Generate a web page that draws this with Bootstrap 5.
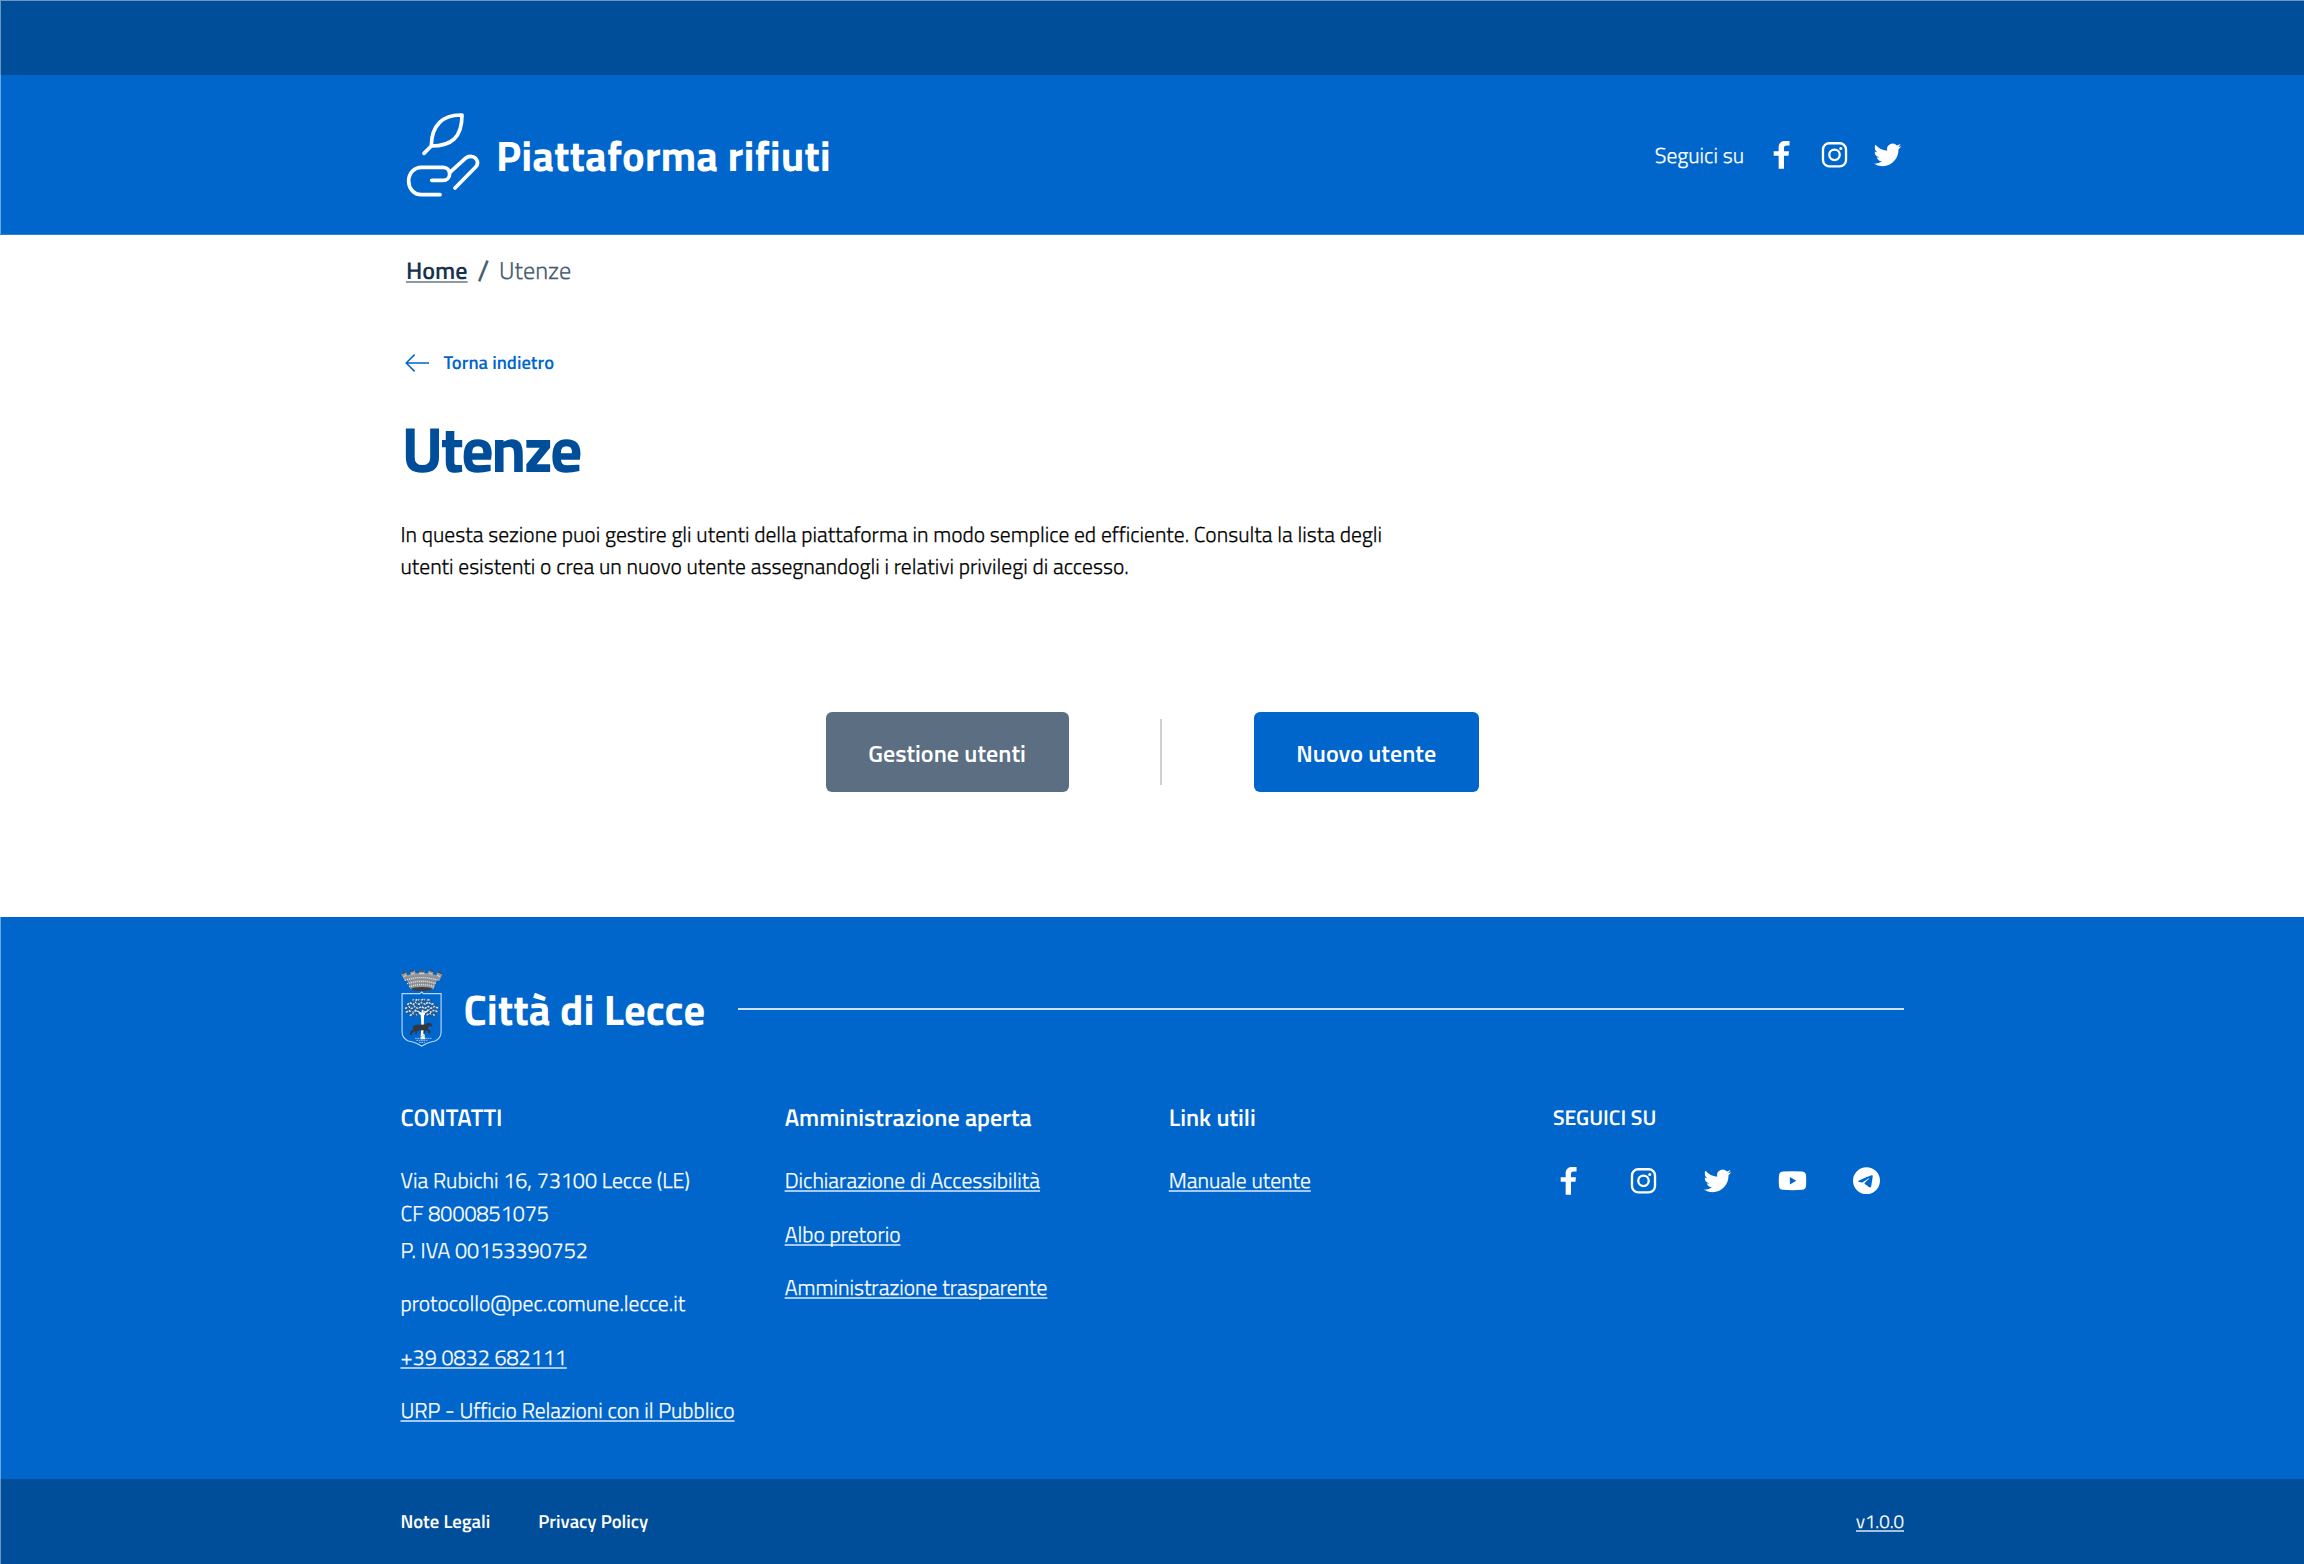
<!DOCTYPE html>
<html lang="it">
<head>
<meta charset="utf-8">
<meta name="viewport" content="width=device-width, initial-scale=1">
<title>Piattaforma rifiuti - Utenze</title>
<link href="https://cdn.jsdelivr.net/npm/bootstrap@5.3.0/dist/css/bootstrap.min.css" rel="stylesheet">
<style>
:root{--blue:#0066cc;--navy:#004d99;--edge:rgba(255,255,255,.42)}
body{font-family:"Titillium Web",Roboto,"Liberation Sans",sans-serif;font-size:21.55px;line-height:32.4px;color:#000;background:#fff;text-rendering:geometricPrecision}
.page-wrap{width:1503.5px;margin-left:400.5px}
.top-strip{height:75px;background:var(--navy);box-shadow:inset 1px 1px 0 var(--edge)}
.main-header{height:160px;background:var(--blue);border-bottom:1px solid #2e82d6;box-shadow:inset 1px 0 0 var(--edge)}
.brand-icon{width:74px;height:86px;margin-left:5.5px}
.brand-name{font-size:42.7px;line-height:48px;margin-left:16px;padding-top:2px}
.thin{font-weight:300;-webkit-text-stroke:.25px currentColor}
.follow{padding-top:4px;margin-right:20px}
.social{width:35px;height:35px;fill:#fff;flex:none}
.head-social{gap:18px;margin-right:-1px}
.foot-social{gap:39.4px;margin-left:-1.5px;margin-top:28.5px}
.crumbs{padding:19.5px 0 0 5.5px;font-size:24.2px;line-height:32px}
.crumbs a{color:#17324d;font-weight:600;text-decoration-color:rgba(23,50,77,.5)}
.crumbs .sep{color:#455b71;width:31.5px;text-align:center;font-weight:400;font-size:29px;-webkit-text-stroke:.4px currentColor}
.crumbs .here{color:#455b71}
a{text-decoration:underline;text-decoration-thickness:1.5px;text-underline-offset:2px;text-decoration-skip-ink:none}
.back{margin:62.5px 0 0 4.5px;font-size:18.65px;font-weight:600;line-height:28px;color:var(--blue);text-decoration:none;gap:14.5px;width:max-content}
.back svg{width:24px;height:18px;fill:none;stroke:var(--blue);stroke-width:1.5}
h1{font-size:64px;line-height:72px;letter-spacing:-2.76px;color:var(--navy);margin:35px 0 34.5px 1px}
.intro{margin:0}
.actions{margin-top:128.7px;padding-left:425px}
.btn-act{--bs-btn-font-size:24.1px;--bs-btn-color:#fff;--bs-btn-border-width:0;--bs-btn-border-radius:6px;--bs-btn-padding-x:0;height:80px;padding-top:7px;line-height:32px;font-weight:600}
.btn-grey{--bs-btn-bg:#5c6f82;width:243px}
.btn-blue{--bs-btn-bg:var(--blue);width:225.5px}
.bar{width:2px;height:66px;background:#d0d0d0;margin:0 91.5px}
main{height:682px}
footer{color:#fff}
footer a{color:#fff;text-decoration-color:rgba(255,255,255,.65)}
.foot-main{height:562px;padding-top:53px;background:var(--blue);box-shadow:inset 1px 0 0 var(--edge)}
.crest{width:41.5px;height:77px}
.city{font-size:42.7px;line-height:48px;margin-left:21.5px;padding-top:3px}
.rule{height:2px;background:#cfe1f4;margin-left:33px}
.foot-cols{--bs-gutter-x:33px;margin-top:55.3px}
.foot-cols h2{font-size:24.05px;line-height:32px;margin:0 0 30.8px;font-weight:600}
.foot-cols p{margin:0 0 21px;white-space:nowrap}
.foot-cols p.addr{margin-bottom:5px}
.foot-cols h2.follow-title{font-size:21.35px;margin:0}
.foot-bottom{height:85px;background:var(--navy);box-shadow:inset 1px 0 0 var(--edge);font-size:18.7px}
.foot-bottom .page-wrap{padding-top:1px}
.foot-bottom a.plain{text-decoration:none;font-weight:600}
</style>
</head>
<body>
<svg class="d-none" xmlns="http://www.w3.org/2000/svg">
  <symbol id="fb" viewBox="0 0 24 24"><path d="M10.05 21.7v-8.9h-3.4V9.7h3.4V7.1c0-3.1 1.95-4.4 4.55-4.4h2.9v3.1h-1.9c-1.5 0-1.9.7-1.9 1.9v2h3.4l-.3 3.1h-3.1v8.9z"/></symbol>
  <symbol id="ig" viewBox="0 0 24 24"><g fill="none" stroke="#fff" stroke-width="1.6"><rect x="4.1" y="4.3" width="15.8" height="15.8" rx="4.3"/><circle cx="12" cy="12.2" r="3.6"/></g><circle cx="16.3" cy="7.9" r="1.05"/></symbol>
  <symbol id="tw" viewBox="0 0 24 24"><path transform="translate(2.5 2.8) scale(.79)" d="M23.953 4.57a10 10 0 01-2.825.775 4.958 4.958 0 002.163-2.723c-.951.555-2.005.959-3.127 1.184a4.92 4.92 0 00-8.384 4.482C7.69 8.095 4.067 6.13 1.64 3.162a4.822 4.822 0 00-.666 2.475c0 1.71.87 3.213 2.188 4.096a4.904 4.904 0 01-2.228-.616v.06a4.923 4.923 0 003.946 4.827 4.996 4.996 0 01-2.212.085 4.936 4.936 0 004.604 3.417 9.867 9.867 0 01-6.102 2.105c-.39 0-.779-.023-1.17-.067a13.995 13.995 0 007.557 2.209c9.053 0 13.998-7.496 13.998-13.985 0-.21 0-.42-.015-.63A9.935 9.935 0 0024 4.59z"/></symbol>
  <symbol id="yt" viewBox="0 0 24 24"><path fill-rule="evenodd" d="M5.4 5.9q6.6-.6 13.2 0c1.8.2 2.6 1.1 2.7 2.8q.2 3.5 0 7c-.2 1.7-1 2.5-2.7 2.7q-6.6.6-13.2 0c-1.8-.2-2.6-1.1-2.7-2.7q-.2-3.5 0-7c.1-1.7.9-2.6 2.7-2.8zM10.2 9.6v5.2l4.4-2.6z"/></symbol>
  <symbol id="tg" viewBox="0 0 24 24"><path transform="translate(2.75 2.85) scale(.77)" d="M11.944 0A12 12 0 0 0 0 12a12 12 0 0 0 12 12 12 12 0 0 0 12-12A12 12 0 0 0 12 0a12 12 0 0 0-.056 0zm4.962 7.224c.1-.002.321.023.465.14a.506.506 0 0 1 .171.325c.016.093.036.306.02.472-.18 1.898-.962 6.502-1.36 8.627-.168.9-.499 1.201-.82 1.23-.696.065-1.225-.46-1.9-.902-1.056-.693-1.653-1.124-2.678-1.8-1.185-.78-.417-1.21.258-1.91.177-.184 3.247-2.977 3.307-3.23.007-.032.014-.15-.056-.212s-.174-.041-.249-.024c-.106.024-1.793 1.14-5.061 3.345-.48.33-.913.49-1.302.48-.428-.008-1.252-.241-1.865-.44-.752-.245-1.349-.374-1.297-.789.027-.216.325-.437.893-.663 3.498-1.524 5.83-2.529 6.998-3.014 3.332-1.386 4.025-1.627 4.476-1.635z"/></symbol>
</svg>

<header class="text-white">
  <div class="top-strip"></div>
  <div class="main-header">
    <div class="page-wrap h-100 d-flex align-items-center">
      <svg class="brand-icon" viewBox="78 156 222 258" fill="none" stroke="#fff" stroke-width="11" stroke-linecap="round" stroke-linejoin="round">
        <path d="M246 165C190 163 154 195 154 258 215 258 246 232 246 165z"/><path d="M154 258l-22 22"/>
        <path d="M180 404H125C100 404 86 384 86 363 86 340 102 322 125 322H189C202 322 209 331 209 342 209 353 200 361 189 361H155"/>
        <path d="M209 338L256 295C265 287 279 287 287 295 294 303 294 313 287 321L225 384"/>
      </svg>
      <div class="brand-name fw-bold">Piattaforma rifiuti</div>
      <div class="follow thin ms-auto">Seguici su</div>
      <div class="head-social d-flex">
        <svg class="social"><use href="#fb"/></svg>
        <svg class="social"><use href="#ig"/></svg>
        <svg class="social"><use href="#tw"/></svg>
      </div>
    </div>
  </div>
</header>

<main>
  <div class="page-wrap">
    <nav class="crumbs d-flex" aria-label="breadcrumb">
      <a href="#">Home</a><span class="sep">/</span><span class="here thin">Utenze</span>
    </nav>
    <a class="back d-flex align-items-center" href="#">
      <svg viewBox="0 0 24 18"><path d="M24 9H1.2M9.6.6L1.2 9l8.4 8.4"/></svg>Torna indietro
    </a>
    <h1 class="fw-bold">Utenze</h1>
    <p class="intro thin">In questa sezione puoi gestire gli utenti della piattaforma in modo semplice ed efficiente. Consulta la lista degli<br>utenti esistenti o crea un nuovo utente assegnandogli i relativi privilegi di accesso.</p>
    <div class="actions d-flex align-items-center">
      <button type="button" class="btn btn-act btn-grey">Gestione utenti</button>
      <div class="bar"></div>
      <button type="button" class="btn btn-act btn-blue">Nuovo utente</button>
    </div>
  </div>
</main>

<footer>
  <div class="foot-main">
    <div class="page-wrap">
      <div class="d-flex align-items-center">
        <svg class="crest" viewBox="34 30 124 231">
          <path d="M34 41l14-6 5 11 10-3-3-9 14-4 4 10h10v-9h16v9h10l4-10 14 4-3 9 10 3 5-11 14 6-9 22-8-2-9 26q-35 10-70 0l-9-26-8 2z" fill="#96999d"/>
          <path d="M36 41l12-5M60 35l13-4M88 33h16M119 31l13 4M144 36l12 5" stroke="#3f444a" stroke-width="4"/>
          <path d="M41 50l9-4M64 43l10-3M88 41h16M118 40l10 3M142 46l9 4" stroke="#d8d8d8" stroke-width="3"/>
          <path d="M46 56q50-16 100 0M52 66q44-15 88 0M56 76q40-14 80 0" fill="none" stroke="#6b7076" stroke-width="3" stroke-dasharray="2 4"/>
          <path d="M46 61q50-17 100 0M52 71q44-14 88 0M58 80q38-12 76 0" fill="none" stroke="#e6e6e6" stroke-width="3.5" stroke-dasharray="3 3"/>
          <ellipse cx="96" cy="87" rx="32" ry="6" fill="#3a3f45"/>
          <path d="M96 96l-5 5H37v115q0 18 19 27 14 3 24 7l16 8 16-8q10-4 24-7 18-9 18-27V101h-53z" fill="none" stroke="#b9d5f2" stroke-width="3.5"/>
          <path d="M92 238l3-36-2-36-20-20 22 12 4-24 3 24 22-14-21 22-1 36 4 36z" fill="#fff"/>
          <g fill="none" stroke-linecap="round">
            <path d="M70 120l5 3 8-5 9 4 9-5 9 4 12-2M54 133l7-5 9 6 8-7 9 6 10-6 9 7 9-8 10 7 11-4M48 145l9-5 8 6 9-7 10 7 11-6 10 6 9-7 10 6 9-6 13 6M50 156l9-4 9 6 9-6 10 5M104 155l11-5 9 6 9-6 10 5M62 166l9-5 9 4M112 164l9-4 12 5" stroke="#d3dde6" stroke-width="5" stroke-dasharray="3 7"/>
            <path d="M64 124l8-3 8 6 9-6 9 5 9-6 10 5 9-3M52 139l8-5 9 6 9-7 10 7 10-7 9 6 10-6 9 6 14-4M47 151l9-6 10 6 9-6 11 6 9-6 10 6 10-6 9 6 10-5 13 4M56 162l9-5 9 5 10-4M108 161l10-5 10 5 12-3M68 170l10-4M116 169l12-3" stroke="#46505a" stroke-width="5" stroke-dasharray="2 8"/>
          </g>
          <path d="M69 201q4-7 12-6l24-1 9-5 9 1 4 7-3 2-6-2-3 7-1 4 8 5-2 7-4-1 2-4-8-4-4 2-1 9-4-1 1-10-14-1-8 5 1 7-4-1-1-8-7 3-4 9-4-1 2-10 8-6z" fill="#33383d" stroke="#33383d" stroke-width="1"/>
          <path d="M76 235h18l2-8h7l3 8h20M80 241h35M88 247h18" fill="none" stroke="#a5c7ea" stroke-width="3" stroke-dasharray="5 2"/>
        </svg>
        <div class="city fw-bold">Città di Lecce</div>
        <div class="rule flex-grow-1"></div>
      </div>
      <div class="foot-cols row">
        <div class="col-3">
          <h2>CONTATTI</h2>
          <p class="addr thin">Via Rubichi 16, 73100 Lecce (LE)<br>CF 8000851075</p>
          <p class="thin">P. IVA 00153390752</p>
          <p class="thin">protocollo@pec.comune.lecce.it</p>
          <p class="thin"><a href="#">+39 0832 682111</a></p>
          <p class="thin"><a href="#">URP - Ufficio Relazioni con il Pubblico</a></p>
        </div>
        <div class="col-3">
          <h2>Amministrazione aperta</h2>
          <p class="thin"><a href="#">Dichiarazione di Accessibilità</a></p>
          <p class="thin"><a href="#">Albo pretorio</a></p>
          <p class="thin"><a href="#">Amministrazione trasparente</a></p>
        </div>
        <div class="col-3">
          <h2>Link utili</h2>
          <p class="thin"><a href="#">Manuale utente</a></p>
        </div>
        <div class="col-3">
          <h2 class="follow-title">SEGUICI SU</h2>
          <div class="foot-social d-flex">
            <svg class="social"><use href="#fb"/></svg>
            <svg class="social"><use href="#ig"/></svg>
            <svg class="social"><use href="#tw"/></svg>
            <svg class="social"><use href="#yt"/></svg>
            <svg class="social"><use href="#tg"/></svg>
          </div>
        </div>
      </div>
    </div>
  </div>
  <div class="foot-bottom">
    <div class="page-wrap h-100 d-flex align-items-center">
      <a class="plain" href="#">Note Legali</a>
      <a class="plain ms-5" href="#">Privacy Policy</a>
      <a class="thin ms-auto" href="#">v1.0.0</a>
    </div>
  </div>
</footer>
<script src="https://cdn.jsdelivr.net/npm/bootstrap@5.3.0/dist/js/bootstrap.bundle.min.js"></script>
</body>
</html>
